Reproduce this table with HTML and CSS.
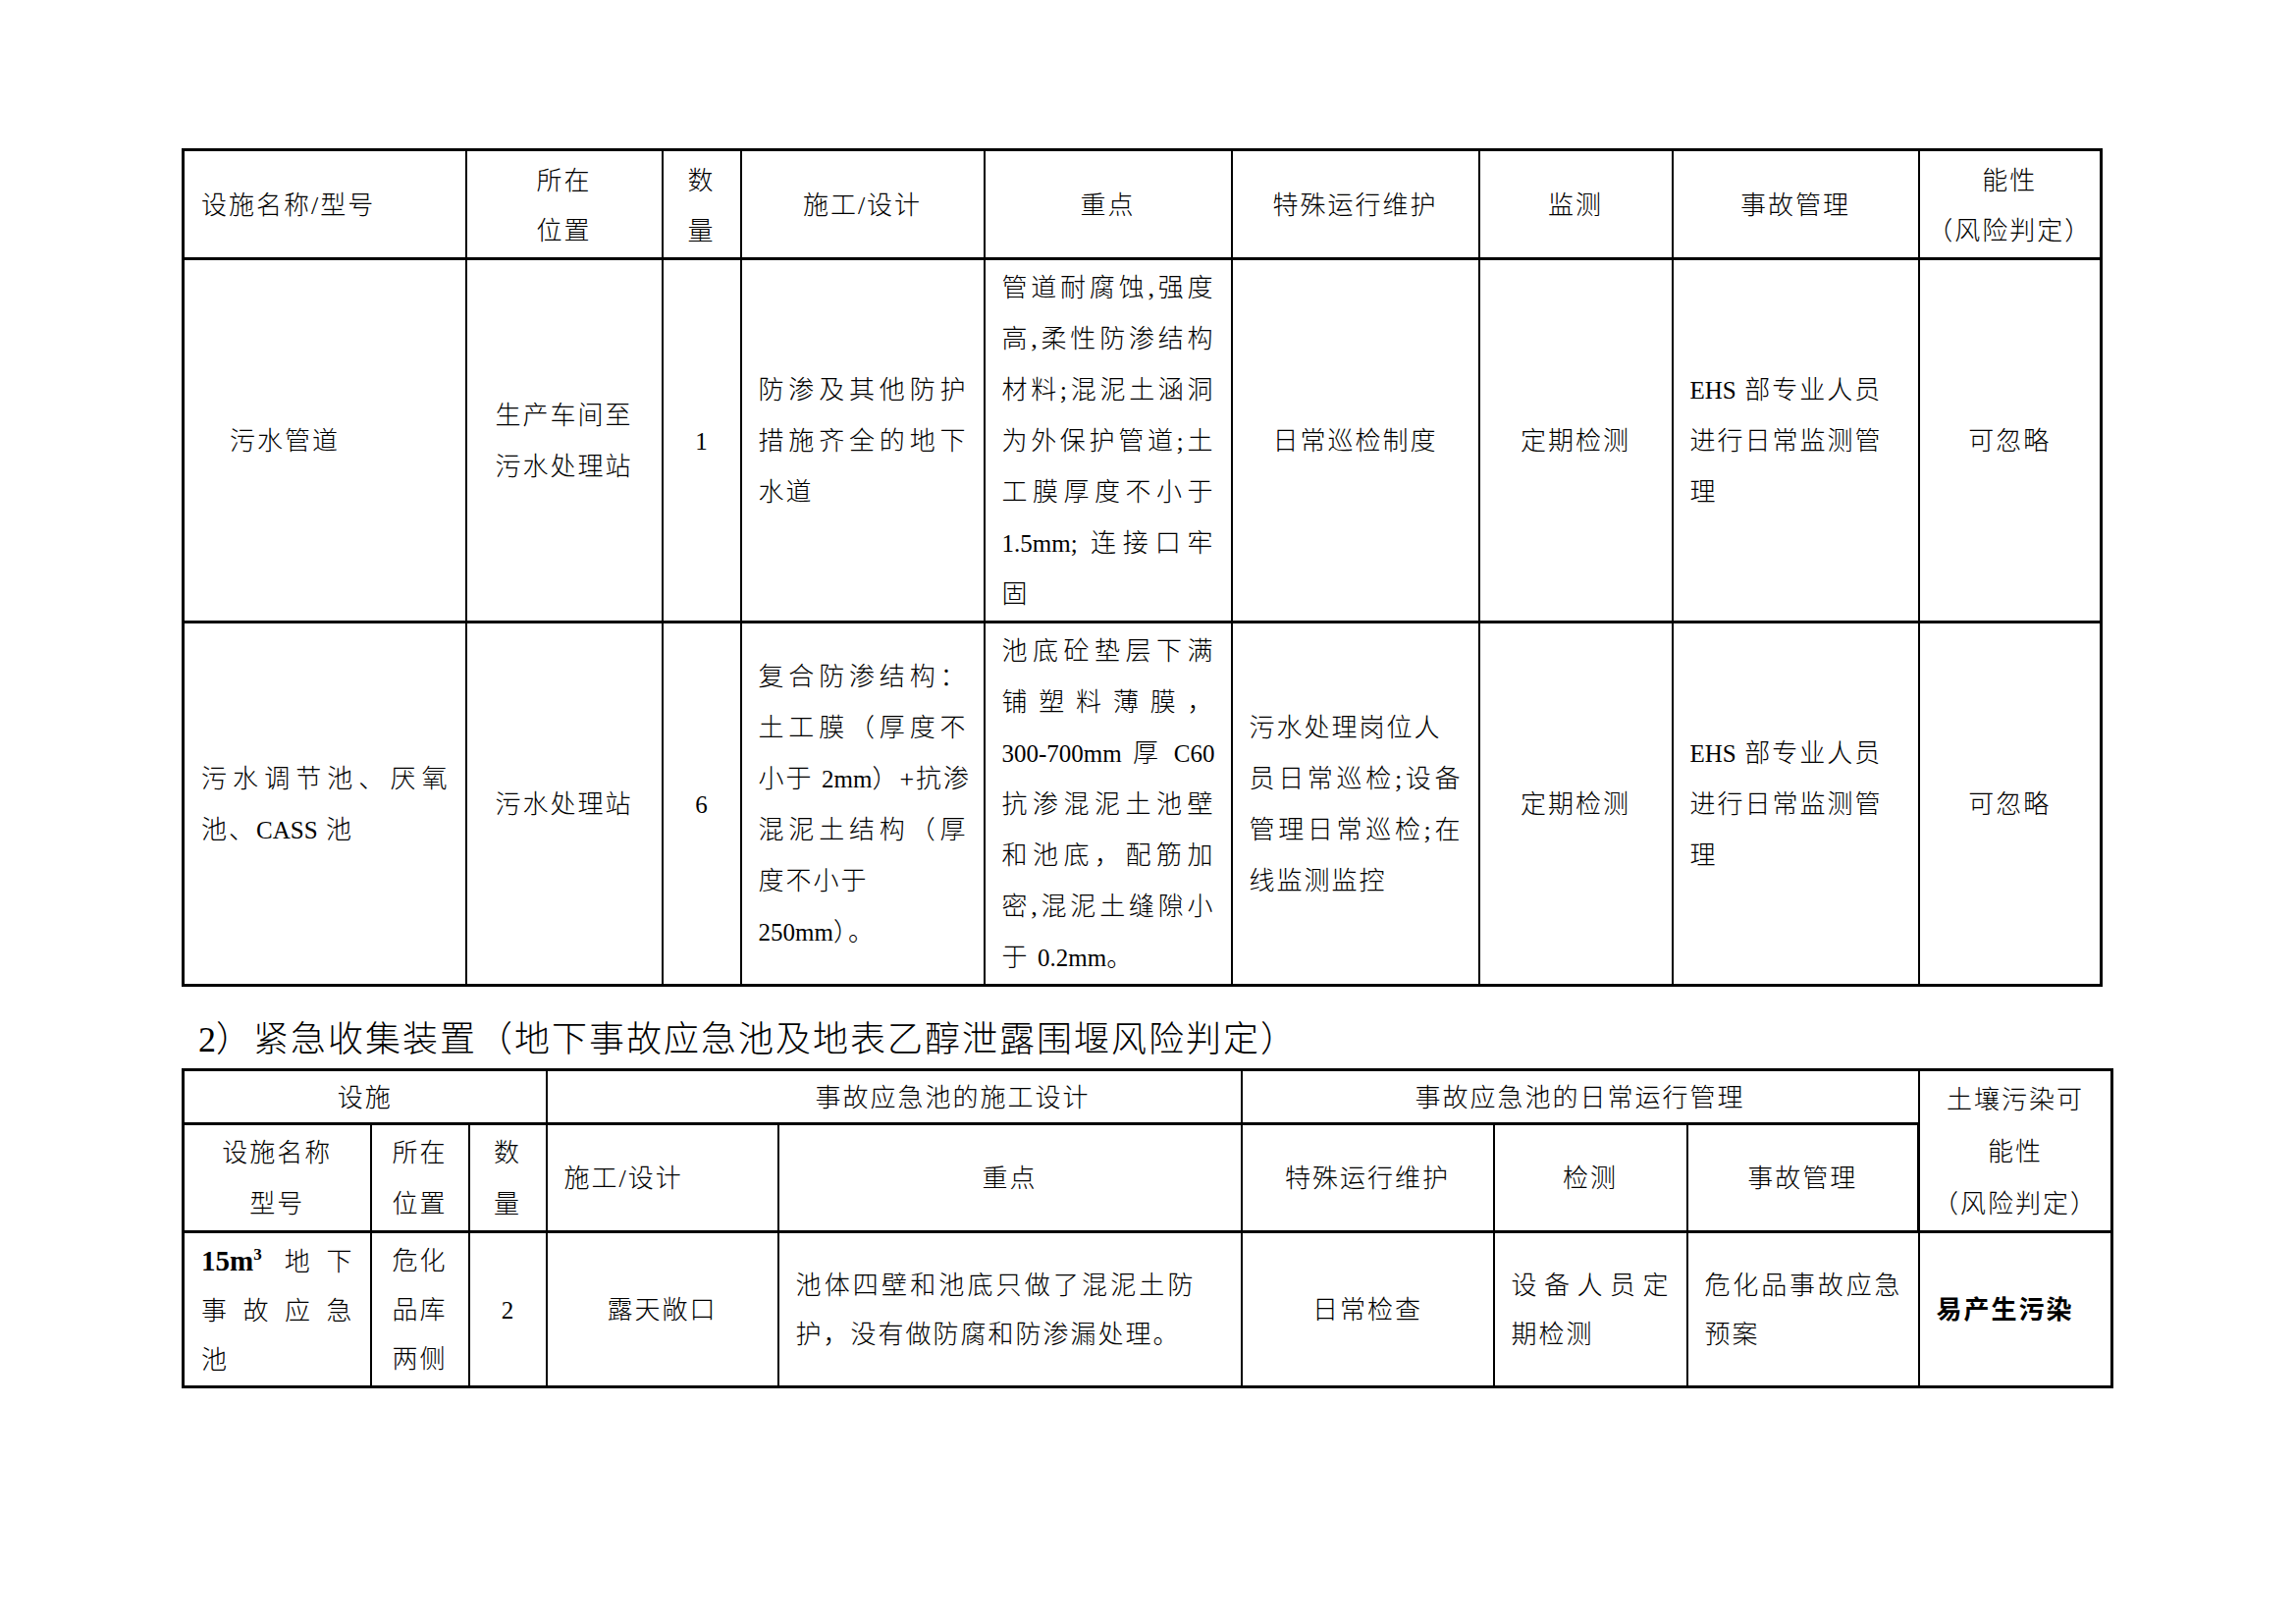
FILE: index.html
```html
<!DOCTYPE html>
<html lang="zh-CN">
<head>
<meta charset="utf-8">
<title>设施风险判定</title>
<link rel="stylesheet" href="styles.css">
</head>
<body>
<main class="page">
<table class="grid t1">
<colgroup>
<col class="a1"><col class="a2"><col class="a3"><col class="a4"><col class="a5"><col class="a6"><col class="a7"><col class="a8"><col class="a9">
</colgroup>
<tr class="hd">
<td class="pl">设施名称/型号</td>
<td>所在<br>位置</td>
<td>数<br>量</td>
<td>施工/设计</td>
<td>重点</td>
<td>特殊运行维护</td>
<td>监测</td>
<td>事故管理</td>
<td>能性<br>（风险判定）</td>
</tr>
<tr class="bd">
<td class="pl ind">污水管道</td>
<td>生产车间至<br>污水处理站</td>
<td><span class="en">1</span></td>
<td class="pl"><span class="jl">防渗及其他防护</span><span class="jl">措施齐全的地下</span><span class="ln">水道</span></td>
<td class="pl"><span class="jl">管道耐腐蚀,强度</span><span class="jl">高,柔性防渗结构</span><span class="jl">材料;混泥土涵洞</span><span class="jl">为外保护管道;土</span><span class="jl">工膜厚度不小于</span><span class="jl"><span class="en">1.5mm;</span> 连接口牢</span><span class="ln">固</span></td>
<td>日常巡检制度</td>
<td>定期检测</td>
<td class="pl"><span class="en">EHS</span> 部专业人员<br>进行日常监测管<br>理</td>
<td>可忽略</td>
</tr>
<tr class="bd">
<td class="pl"><span class="jl">污水调节池、厌氧</span><span class="ln">池、<span class="en">CASS</span> 池</span></td>
<td>污水处理站</td>
<td><span class="en">6</span></td>
<td class="pl"><span class="jl">复合防渗结构：</span><span class="jl">土工膜（厚度不</span><span class="jl">小于 <span class="en">2mm</span>）+抗渗</span><span class="jl">混泥土结构（厚</span><span class="ln">度不小于</span><span class="ln"><span class="en">250mm</span>）。</span></td>
<td class="pl"><span class="jl">池底砼垫层下满</span><span class="jl">铺塑料薄膜，</span><span class="jl"><span class="en">300-700mm</span> 厚 <span class="en">C60</span></span><span class="jl">抗渗混泥土池壁</span><span class="jl">和池底，配筋加</span><span class="jl">密,混泥土缝隙小</span><span class="ln">于 <span class="en">0.2mm</span>。</span></td>
<td class="pl"><span class="ln">污水处理岗位人</span><span class="jl">员日常巡检;设备</span><span class="jl">管理日常巡检;在</span><span class="ln">线监测监控</span></td>
<td>定期检测</td>
<td class="pl"><span class="en">EHS</span> 部专业人员<br>进行日常监测管<br>理</td>
<td>可忽略</td>
</tr>
</table>

<h2 class="sec"><span class="en">2</span>）紧急收集装置（地下事故应急池及地表乙醇泄露围堰风险判定）</h2>

<table class="grid t2">
<colgroup>
<col class="b1"><col class="b2"><col class="b3"><col class="b4"><col class="b5"><col class="b6"><col class="b7"><col class="b8"><col class="b9">
</colgroup>
<tr class="ha">
<td colspan="3">设施</td>
<td colspan="2" class="shift">事故应急池的施工设计</td>
<td colspan="3">事故应急池的日常运行管理</td>
<td rowspan="2" class="tall">土壤污染可<br>能性<br>（风险判定）</td>
</tr>
<tr class="hb">
<td>设施名称<br>型号</td>
<td>所在<br>位置</td>
<td>数<br>量</td>
<td class="pl">施工/设计</td>
<td>重点</td>
<td>特殊运行维护</td>
<td>检测</td>
<td>事故管理</td>
</tr>
<tr class="bc">
<td class="pl"><span class="jl"><b class="num">15m<sup class="sup">3</sup></b> 地下</span><span class="jl">事故应急</span><span class="ln">池</span></td>
<td>危化<br>品库<br>两侧</td>
<td><span class="en">2</span></td>
<td>露天敞口</td>
<td class="pl wide"><span class="jl">池体四壁和池底只做了混泥土防</span><span class="ln">护，没有做防腐和防渗漏处理。</span></td>
<td>日常检查</td>
<td class="pl"><span class="jl">设备人员定</span><span class="ln">期检测</span></td>
<td class="pl"><span class="jl">危化品事故应急</span><span class="ln">预案</span></td>
<td class="pl strong">易产生污染</td>
</tr>
</table>
</main>
</body>
</html>
```

FILE: styles.css
```css
html, body {
  margin: 0;
  padding: 0;
  background: #ffffff;
}

body {
  color: #000000;
  font-family: "Liberation Serif", "Noto Sans CJK SC", serif;
  font-weight: 300;
  font-size: 26px;
  letter-spacing: 2px;
}

.page {
  padding: 151px 0 0 185px;
}

.grid {
  border-collapse: collapse;
  table-layout: fixed;
}

.grid td {
  padding: 3px 0 0 0;
  text-align: center;
  vertical-align: middle;
  border-left: 2px solid #000;
  border-right: 2px solid #000;
  border-top: 3px solid #000;
  border-bottom: 3px solid #000;
  white-space: nowrap;
  overflow: hidden;
}

.grid td:first-child {
  border-left-width: 3px;
}

.grid td:last-child {
  border-right-width: 3px;
}

.t1 { width: 1954px; }
.a1 { width: 288px; }
.a2 { width: 200px; }
.a3 { width: 80px; }
.a4 { width: 248px; }
.a5 { width: 252px; }
.a6 { width: 252px; }
.a7 { width: 197px; }
.a8 { width: 251px; }
.a9 { width: 186px; }

.t1 .hd td {
  height: 105px;
  line-height: 51px;
}

.t1 .bd td {
  height: 364px;
  line-height: 52px;
}

.t2 { width: 1965px; }
.b1 { width: 191px; }
.b2 { width: 100px; }
.b3 { width: 79px; }
.b4 { width: 236px; }
.b5 { width: 472px; }
.b6 { width: 257px; }
.b7 { width: 197px; }
.b8 { width: 236px; }
.b9 { width: 197px; }

.t2 .ha td {
  height: 49px;
  line-height: 49px;
}

.t2 .ha td.tall {
  line-height: 53px;
}

.t2 .hb td {
  height: 104px;
  line-height: 52px;
}

.t2 .bc td {
  height: 151px;
  line-height: 50px;
}

.grid td.pl {
  text-align: left;
  padding: 3px 16px 0 17px;
}

.grid td.ind {
  padding-left: 46px;
}

.grid td.shift {
  padding-left: 120px;
}

.grid td.wide {
  padding-right: 46px;
}

.grid td.strong {
  font-weight: 700;
}

.jl {
  display: block;
  text-align: justify;
  text-align-last: justify;
}

.ln {
  display: block;
}

.en {
  font-family: "Liberation Serif", serif;
  font-size: 25px;
  letter-spacing: 0;
}

.num {
  font-family: "Liberation Serif", serif;
  font-weight: 700;
  font-size: 29px;
  letter-spacing: 0;
}

.sup {
  font-size: 17px;
  line-height: 0;
  vertical-align: 11px;
}

.sec {
  margin: 0;
  height: 83px;
  box-sizing: border-box;
  padding: 32px 0 0 17px;
  font-size: 36px;
  line-height: 44px;
  font-weight: 300;
  letter-spacing: 2px;
}

.sec .en {
  font-size: 36px;
}
```
